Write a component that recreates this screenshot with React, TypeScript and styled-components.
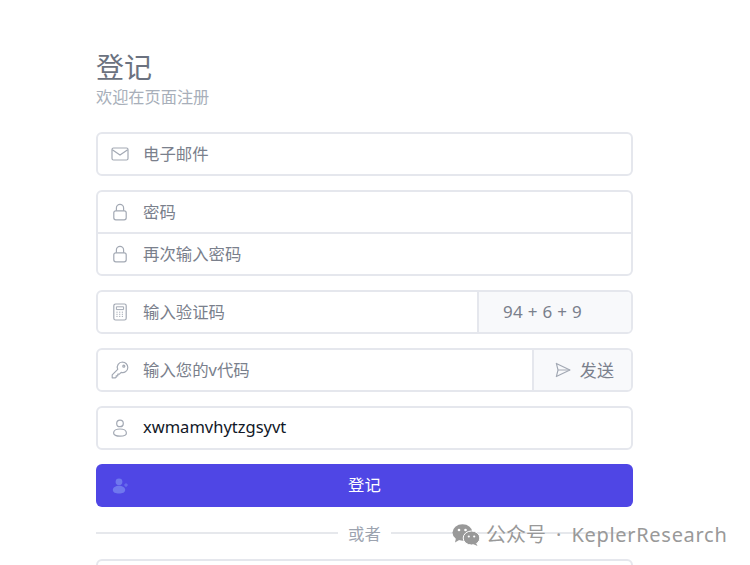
import React from 'react';
import styled, { createGlobalStyle } from 'styled-components';

const GlobalStyle = createGlobalStyle`
    html, body {
        margin: 0;
        padding: 0;
        height: 565px;
        overflow: hidden;
        background: #fff;
        font-family: "Noto Sans", "Noto Sans CJK SC", sans-serif;
    }
`;

const MailIcon = () => (
    <svg width="18" height="18" viewBox="0 0 18 18" fill="none" stroke="currentColor" strokeWidth="1.2">
        <rect x="1" y="3" width="16" height="12" rx="1.5" />
        <path d="M1.3 4.800L9 10l7.700-5.200" />
    </svg>
);

const LockIcon = () => (
    <svg width="18" height="18" viewBox="0 0 18 18" fill="none" stroke="currentColor" strokeWidth="1.2">
        <rect x="2.800" y="7.800" width="12.400" height="9" rx="2" />
        <path d="M5.400 7.800V5a3.600 3.600 0 0 1 7.200 0v2.800" />
    </svg>
);

const CalcIcon = () => (
    <svg width="18" height="18" viewBox="0 0 18 18" fill="none" stroke="currentColor" strokeWidth="1.2">
        <rect x="2.800" y="1" width="12.400" height="16" rx="1.800" />
        <path d="M5.400 3.800h7.200v2.800H5.400z" strokeWidth="1" />
        <path d="M5.400 9.200h7.200M5.400 11.300h7.200M5.400 13.400h7.200" strokeWidth="1" strokeDasharray="1.200 1.500" />
    </svg>
);

const KeyIcon = () => (
    <svg width="18" height="18" viewBox="0 0 18 18" fill="none" stroke="currentColor" strokeWidth="1.2">
        <path d="M11.600 1.200a5.200 5.200 0 0 1 5.200 5.200 5.200 5.200 0 0 1-6.600 5L8.400 13.200H6.800v1.600H5.200v1.400l-.8.600H1.200v-3l5.500-5.500a5.200 5.200 0 0 1 4.900-7.300z" strokeLinejoin="round" />
        <circle cx="12.800" cy="5.200" r="1" />
    </svg>
);

const UserIcon = () => (
    <svg width="18" height="18" viewBox="0 0 18 18" fill="none" stroke="currentColor" strokeWidth="1.2">
        <circle cx="9" cy="4.400" r="3.300" />
        <path d="M2.600 14c0-2.400 2.800-4 6.400-4s6.400 1.600 6.400 4c0 2-2.800 3.200-6.400 3.200S2.600 16 2.600 14z" />
    </svg>
);

const SendIcon = () => (
    <svg width="16" height="16" viewBox="0 0 18 18" fill="none" stroke="currentColor" strokeWidth="1.300" strokeLinejoin="round">
        <path d="M1.500 1.600L16.800 9 1.500 16.400 3.400 9z" />
        <path d="M3.400 9h13.400" />
    </svg>
);

const UserPlusIcon = () => (
    <svg width="18" height="18" viewBox="0 0 18 18" fill="currentColor">
        <circle cx="7" cy="4.800" r="3.400" />
        <path d="M.8 13c0-2.600 2.800-4.200 6.200-4.200s6.200 1.600 6.200 4.200c0 2.400-2.800 3.600-6.200 3.600S.8 15.400.8 13z" />
        <path d="M13.500 6.200h1v1.400h1.400v.9h-1.400v1.400h-1V8.500h-1.400v-.9h1.400z" />
    </svg>
);

const WeChatIcon = () => (
    <svg width="28" height="22" viewBox="0 0 28 22" fill="#999">
        <ellipse cx="10.500" cy="8.500" rx="10" ry="8.300" />
        <path d="M4 14l-1 4.500 5-3z" />
        <ellipse cx="19.500" cy="14" rx="8.300" ry="7" stroke="#fff" strokeWidth="1" />
        <path d="M24 19l1.500 3-4.500-2z" />
        <circle cx="7" cy="6" r="1.300" fill="#fff" />
        <circle cx="13.500" cy="6" r="1.300" fill="#fff" />
        <circle cx="16.800" cy="12.500" r="1.100" fill="#fff" />
        <circle cx="22.200" cy="12.500" r="1.100" fill="#fff" />
    </svg>
);

export default function App() {
    return (
        <Page>
            <GlobalStyle />
            <Form>
                <Title>登记</Title>
                <Subtitle>欢迎在页面注册</Subtitle>

                <FieldBox>
                    <Field>
                        <IconSlot><MailIcon /></IconSlot>
                        <Placeholder>电子邮件</Placeholder>
                    </Field>
                </FieldBox>

                <FieldBox>
                    <Field>
                        <IconSlot><LockIcon /></IconSlot>
                        <Placeholder>密码</Placeholder>
                    </Field>
                    <RowLine />
                    <Field>
                        <IconSlot><LockIcon /></IconSlot>
                        <Placeholder>再次输入密码</Placeholder>
                    </Field>
                </FieldBox>

                <FieldBox $row>
                    <Field $grow>
                        <IconSlot><CalcIcon /></IconSlot>
                        <Placeholder>输入验证码</Placeholder>
                    </Field>
                    <Addon $width={154} $start>94 + 6 + 9</Addon>
                </FieldBox>

                <FieldBox $row>
                    <Field $grow>
                        <IconSlot><KeyIcon /></IconSlot>
                        <Placeholder>输入您的v代码</Placeholder>
                    </Field>
                    <Addon $width={99}>
                        <SendIcon />
                        发送
                    </Addon>
                </FieldBox>

                <FieldBox>
                    <Field>
                        <IconSlot><UserIcon /></IconSlot>
                        <Value>xwmamvhytzgsyvt</Value>
                    </Field>
                </FieldBox>

                <SubmitButton>
                    <SubmitIcon><UserPlusIcon /></SubmitIcon>
                    登记
                </SubmitButton>

                <Divider><span>或者</span></Divider>

                <FieldBox>
                    <Field />
                </FieldBox>
            </Form>

            <Watermark>
                <WeChatIcon />
                <span>公众号</span>
                <WatermarkDot>·</WatermarkDot>
                <WatermarkName>KeplerResearch</WatermarkName>
            </Watermark>
        </Page>
    );
}

const Page = styled.div`
    position: relative;
    width: 750px;
    height: 565px;
    overflow: hidden;
    background: #fff;
`;

const Form = styled.div`
    display: flex;
    flex-direction: column;
    width: 537px;
    margin-left: 96px;
    padding-top: 47px;
`;

const Title = styled.h1`
    margin: 0;
    font-size: 28px;
    line-height: 40px;
    font-weight: 400;
    color: #6b7280;
`;

const Subtitle = styled.p`
    margin: 0 0 24px;
    font-size: 16.200px;
    line-height: 21px;
    font-weight: 400;
    color: #a8afba;
`;

const FieldBox = styled.div<{ $row?: boolean }>`
    display: flex;
    flex-direction: ${p => (p.$row ? 'row' : 'column')};
    flex-shrink: 0;
    margin-bottom: 14px;
    border: 2px solid #e5e7ed;
    border-radius: 6px;
    background: #fff;
    overflow: hidden;
`;

const RowLine = styled.div`
    height: 2px;
    background: #e5e7ed;
`;

const Field = styled.div<{ $grow?: boolean }>`
    display: flex;
    align-items: center;
    height: 40px;
    padding-left: 13px;
    flex: ${p => (p.$grow ? 1 : 'none')};
`;

const IconSlot = styled.span`
    display: flex;
    width: 18px;
    height: 18px;
    margin-right: 14px;
    color: #a3a9b4;
`;

const Placeholder = styled.span`
    padding-bottom: 2px;
    font-size: 16.400px;
    color: #7a808c;
`;

const Value = styled.span`
    padding-bottom: 3px;
    font-size: 16.500px;
    color: #111827;
`;

const Addon = styled.div<{ $width: number; $start?: boolean }>`
    display: flex;
    align-items: center;
    justify-content: ${p => (p.$start ? 'flex-start' : 'center')};
    gap: 9px;
    width: ${p => p.$width}px;
    box-sizing: border-box;
    padding-left: ${p => (p.$start ? '24px' : '4px')};
    padding-bottom: 1px;
    border-left: 2px solid #e5e7ed;
    background: #f8f9fb;
    font-size: 17px;
    letter-spacing: 0.3px;
    color: #7a808c;
    svg {
        color: #a3a9b4;
    }
`;

const SubmitButton = styled.button`
    position: relative;
    flex-shrink: 0;
    height: 43px;
    padding: 0 0 3px;
    border: none;
    border-radius: 6px;
    background: #4f46e5;
    color: #fff;
    font-family: inherit;
    font-size: 16.400px;
`;

const SubmitIcon = styled.span`
    position: absolute;
    left: 16px;
    top: 13px;
    display: flex;
    color: #6f77ee;
`;

const Divider = styled.div`
    display: flex;
    align-items: center;
    height: 52px;
    font-size: 16.400px;
    color: #9ca3af;
    &::before, &::after {
        content: '';
        flex: 1;
        height: 2px;
        background: #e6e8ec;
    }
    span {
        padding: 0 10px;
    }
`;

const Watermark = styled.div`
    position: absolute;
    left: 452px;
    top: 522px;
    display: flex;
    align-items: center;
    gap: 6px;
    font-size: 20px;
    line-height: 26px;
    color: #999;
    white-space: nowrap;
`;

const WatermarkDot = styled.span`
    margin: 0 4px;
`;

const WatermarkName = styled.span`
    letter-spacing: 0.7px;
`;
